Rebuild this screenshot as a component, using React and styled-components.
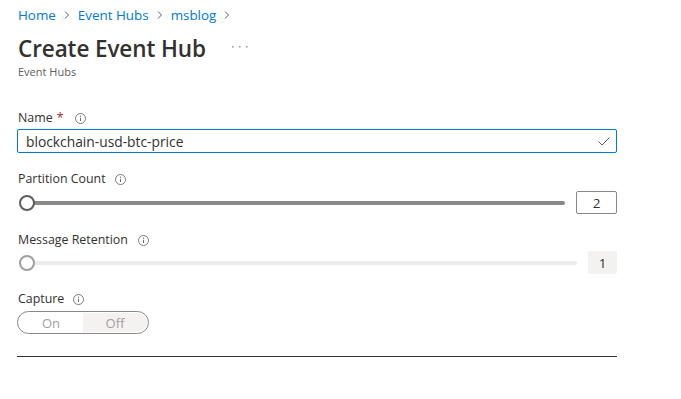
import React from "react";
import styled, { createGlobalStyle } from "styled-components";

const Global = createGlobalStyle`
  html, body { margin: 0; padding: 0; background: #fff; }
  body { font-family: "Open Sans", "Noto Sans", sans-serif; color: #323130; }
`;

const Page = styled.div`
  width: 681px;
  height: 399px;
  box-sizing: border-box;
  padding: 5px 0 0 17px;
  display: flex;
  flex-direction: column;
`;

const Crumbs = styled.nav`
  display: flex;
  align-items: center;
  gap: 7px;
  font-size: 13.4px;
  height: 20px;
  padding-left: 1px;
`;

const CrumbLink = styled.span`
  color: #0078d4;
`;

const Chevron = () => (
  <svg width="8" height="10" viewBox="0 0 8 10">
    <path d="M2 1.5 L5.5 5 L2 8.5" fill="none" stroke="#605e5c" strokeWidth="1" />
  </svg>
);

const TitleRow = styled.div`
  display: flex;
  align-items: center;
  margin-top: 9px;
  padding-left: 1px;
`;

const Title = styled.h1`
  margin: 0;
  font-size: 22.5px;
  font-weight: 600;
  line-height: 30px;
  color: #323130;
  letter-spacing: -0.1px;
`;

const More = styled.svg`
  margin-left: 26px;
  margin-top: -4px;
  flex: none;
`;

const Subtitle = styled.div`
  font-size: 11px;
  color: #605e5c;
  line-height: 14px;
  padding-left: 1px;
  margin-top: 1px;
`;

const Form = styled.div`
  width: 600px;
  display: flex;
  flex-direction: column;
  margin-top: 30px;
`;

const Field = styled.div`
  display: flex;
  flex-direction: column;
  margin-bottom: ${(p) => p.$mb || 0}px;
`;

const Label = styled.label`
  display: flex;
  align-items: center;
  font-size: 12.4px;
  line-height: 18px;
  height: 18px;
  padding-left: 1px;
  color: #323130;
`;

const Required = styled.span`
  color: #a4262c;
  margin-left: 4px;
`;

const InfoIcon = styled.svg`
  margin-left: ${(p) => p.$ml || 9}px;
  flex: none;
`;

const Info = ({ ml }) => (
  <InfoIcon $ml={ml} width="11" height="11" viewBox="0 0 11 11">
    <circle cx="5.5" cy="5.5" r="5" fill="none" stroke="#605e5c" strokeWidth="0.8" />
    <circle cx="5.5" cy="3.2" r="0.6" fill="#605e5c" />
    <path d="M5.5 4.8 V8" stroke="#605e5c" strokeWidth="0.9" />
  </InfoIcon>
);

const InputBox = styled.div`
  margin-top: 2px;
  height: 24px;
  box-sizing: border-box;
  border: 1px solid #0078d4;
  border-radius: 2px;
  display: flex;
  align-items: center;
  justify-content: space-between;
  padding: 0 6px 0 8px;
  font-size: 13.8px;
  color: #323130;
`;

const SliderRow = styled.div`
  display: flex;
  align-items: center;
  margin-top: ${(p) => p.$mt}px;
  height: 23px;
`;

const Track = styled.div`
  flex: 1;
  position: relative;
  height: 4px;
  margin-left: 10px;
  margin-right: ${(p) => p.$mr}px;
  border-radius: 2px;
  background: ${(p) => p.$color};
`;

const Thumb = styled.div`
  position: absolute;
  left: -8px;
  top: -6px;
  width: 16px;
  height: 16px;
  box-sizing: border-box;
  border-radius: 50%;
  border: 2px solid ${(p) => p.$color};
  background: #fff;
`;

const ValueBox = styled.div`
  width: ${(p) => p.$w}px;
  height: 23px;
  box-sizing: border-box;
  display: flex;
  align-items: center;
  justify-content: center;
  font-size: 13.5px;
  color: #323130;
  border-radius: 2px;
  border: ${(p) => (p.$disabled ? "none" : "1px solid #8a8886")};
  background: ${(p) => (p.$disabled ? "#f3f2f1" : "#fff")};
`;

const Toggle = styled.div`
  margin-top: 3px;
  width: 132px;
  height: 23px;
  box-sizing: border-box;
  border: 1px solid #8a8886;
  border-radius: 12px;
  display: flex;
  padding: 1px;
  font-size: 13px;
`;

const ToggleOpt = styled.div`
  flex: 1;
  display: flex;
  align-items: center;
  justify-content: center;
  color: #a19f9d;
  border-radius: ${(p) => (p.$active ? "0 10px 10px 0" : "10px 0 0 10px")};
  background: ${(p) => (p.$active ? "#f3f2f1" : "transparent")};
`;

const Divider = styled.hr`
  margin: 22px 0 0 0;
  border: none;
  border-top: 1px solid #323130;
  width: 600px;
`;

export default function App() {
  return (
    <>
      <Global />
      <Page>
        <Crumbs>
          <CrumbLink>Home</CrumbLink>
          <Chevron />
          <CrumbLink>Event Hubs</CrumbLink>
          <Chevron />
          <CrumbLink>msblog</CrumbLink>
          <Chevron />
        </Crumbs>
        <TitleRow>
          <Title>Create Event Hub</Title>
          <More width="16" height="4" viewBox="0 0 16 4">
            <rect x="0" y="1" width="1.6" height="1.6" fill="#a19f9d" />
            <rect x="7" y="1" width="1.6" height="1.6" fill="#a19f9d" />
            <rect x="14" y="1" width="1.6" height="1.6" fill="#a19f9d" />
          </More>
        </TitleRow>
        <Subtitle>Event Hubs</Subtitle>
        <Form>
          <Field $mb={17}>
            <Label>
              Name<Required>*</Required>
              <Info ml={12} />
            </Label>
            <InputBox>
              <span>blockchain-usd-btc-price</span>
              <svg width="12" height="9" viewBox="0 0 12 9">
                <path d="M0.5 4.5 L4 8 L11.5 0.5" fill="none" stroke="#605e5c" strokeWidth="1" />
              </svg>
            </InputBox>
          </Field>
          <Field $mb={17}>
            <Label>
              Partition Count
              <Info ml={9} />
            </Label>
            <SliderRow $mt={3}>
              <Track $color="#8a8886" $mr={11}>
                <Thumb $color="#605e5c" />
              </Track>
              <ValueBox $w={41}>2</ValueBox>
            </SliderRow>
          </Field>
          <Field $mb={16}>
            <Label>
              Message Retention
              <Info ml={10} />
            </Label>
            <SliderRow $mt={2}>
              <Track $color="#edebe9" $mr={11}>
                <Thumb $color="#a19f9d" />
              </Track>
              <ValueBox $w={29} $disabled>1</ValueBox>
            </SliderRow>
          </Field>
          <Field>
            <Label>
              Capture
              <Info ml={9} />
            </Label>
            <Toggle>
              <ToggleOpt>On</ToggleOpt>
              <ToggleOpt $active>Off</ToggleOpt>
            </Toggle>
          </Field>
          <Divider />
        </Form>
      </Page>
    </>
  );
}
